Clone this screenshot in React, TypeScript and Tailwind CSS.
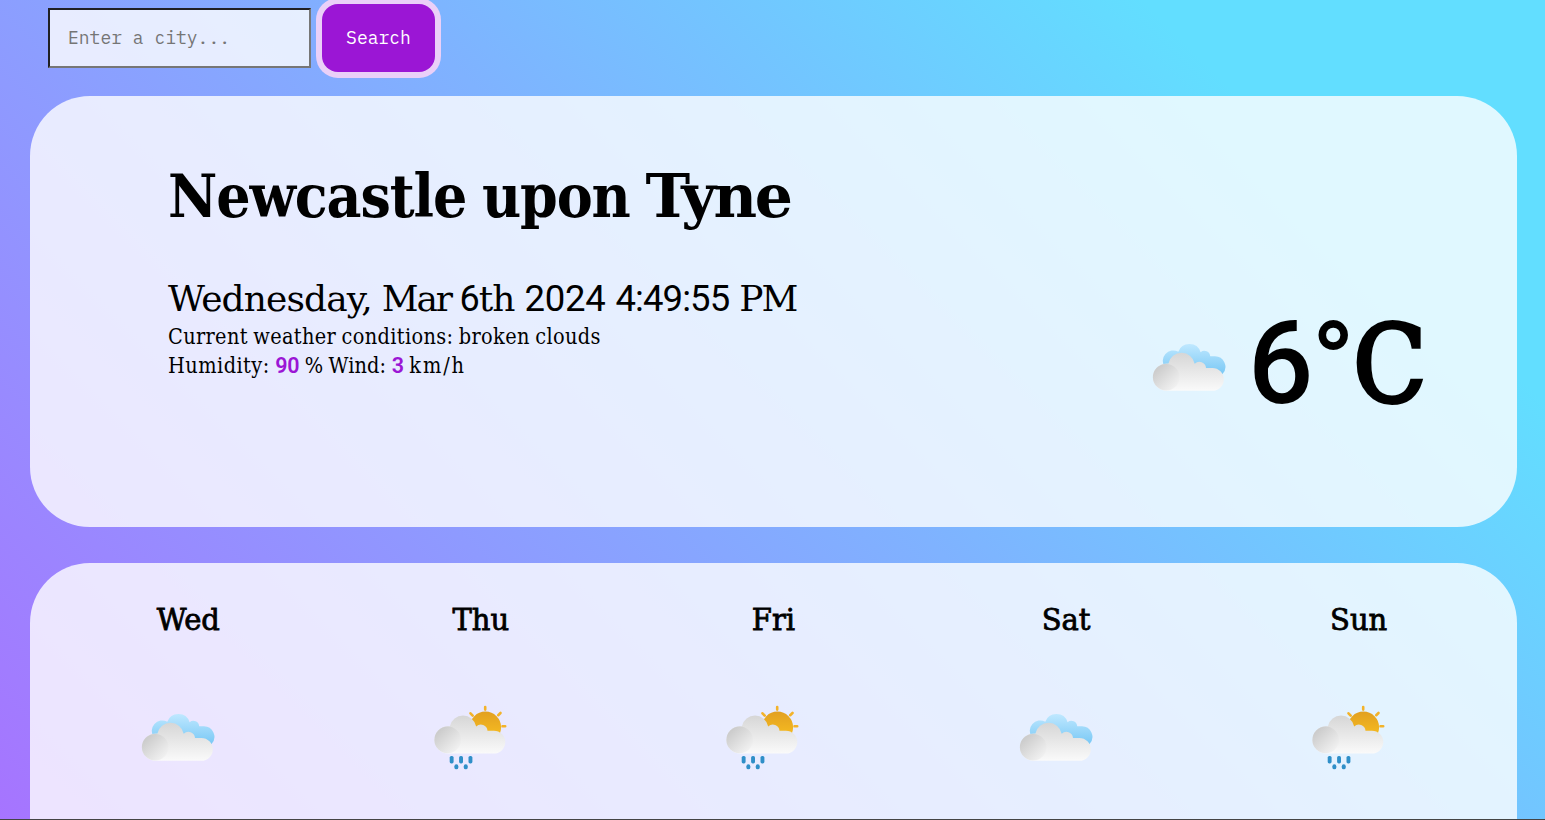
import React from "react";

const slab = "font-['Roboto_Slab','DejaVu_Serif',serif] [font-stretch:75%]";
const digits = "font-['Roboto',sans-serif] [font-stretch:100%]";

function CloudBody({ id }: { id: string }) {
  return (
    <>
      <defs>
        <linearGradient id={id + "f"} x1="0" y1="0" x2="0" y2="1">
          <stop offset="0" stopColor="#d6d6d6" />
          <stop offset="1" stopColor="#fafafa" />
        </linearGradient>
        <linearGradient id={id + "c"} x1="0.1" y1="0.1" x2="0.85" y2="0.9">
          <stop offset="0" stopColor="#c8c8c8" />
          <stop offset="1" stopColor="#f2f2f2" />
        </linearGradient>
      </defs>
      <path
        fill={`url(#${id}f)`}
        d="M35.6 70.8A13.7 13.7 0 0 1 22 57.1A13.7 13.7 0 0 1 37.4 43.6A13.4 13.4 0 0 1 63.7 43.8A6.6 6.6 0 0 1 75 48H81.4A11.4 11.4 0 0 1 81.4 70.8Z"
      />
      <circle cx="35.2" cy="57.2" r="13.3" fill={`url(#${id}c)`} />
    </>
  );
}

function CloudIcon({ id }: { id: string }) {
  return (
    <svg width="76" height="84" viewBox="20 15 76 84" className="block">
      <defs>
        <linearGradient id={id + "b"} x1="0" y1="0" x2="0" y2="1">
          <stop offset="0" stopColor="#bfe8ff" />
          <stop offset="1" stopColor="#6cc2f3" />
        </linearGradient>
      </defs>
      <path
        fill={`url(#${id}b)`}
        d="M33.8 47A10.4 10.4 0 0 1 47.3 31.8A11.8 11.8 0 0 1 69.6 32.2A5.8 5.8 0 0 1 79.2 36.3H83.5A10.5 10.5 0 0 1 91.5 54L60 60Z"
      />
      <CloudBody id={id} />
    </svg>
  );
}

function RainIcon({ id }: { id: string }) {
  return (
    <svg width="76" height="84" viewBox="17.5 15 76 84" className="block">
      <defs>
        <linearGradient id={id + "s"} x1="0" y1="0" x2="0" y2="1">
          <stop offset="0" stopColor="#e2a021" />
          <stop offset="1" stopColor="#fcc421" />
        </linearGradient>
      </defs>
      <circle cx="69.9" cy="37.3" r="15.7" fill={`url(#${id}s)`} />
      <path
        stroke="#f3b32a"
        strokeWidth="2.6"
        strokeLinecap="round"
        d="M69.7 17V19.6M57.2 25.6L55 23.3M82.7 25.2L85 23M87 36.2H89.7"
      />
      <g transform="translate(-3 -7.3)">
        <CloudBody id={id} />
      </g>
      <g fill="#2f8fc8">
        <rect x="34.2" y="66" width="3.9" height="7.4" rx="1.6" />
        <rect x="43.6" y="66" width="3.9" height="7.4" rx="1.6" />
        <rect x="53" y="66" width="3.9" height="7.4" rx="1.6" />
        <rect x="38.9" y="74.3" width="3.9" height="5" rx="1.9" />
        <rect x="48.3" y="74.3" width="3.9" height="5" rx="1.9" />
      </g>
    </svg>
  );
}

const days = [
  { name: "Wed", rain: false },
  { name: "Thu", rain: true },
  { name: "Fri", rain: true },
  { name: "Sat", rain: false },
  { name: "Sun", rain: true },
];

export default function App() {
  return (
    <div
      className={`flex h-[820px] w-full flex-col overflow-hidden border-b border-[#444] bg-[linear-gradient(45deg,#a674ff_0%,#7fb2ff_51%,#62deff_83%)] text-black ${slab}`}
    >
      <form className="flex h-24 shrink-0 items-start pl-12 pt-2" onSubmit={(e) => e.preventDefault()}>
        <input
          placeholder="Enter a city..."
          className="h-[60px] w-[263px] border-2 border-t-[#202024] border-l-[#202024] border-r-[#767676] border-b-[#767676] bg-white/80 px-[18px] pb-[2px] font-['IBM_Plex_Mono','Liberation_Mono',monospace] text-[18px] outline-none placeholder:text-[#757575]"
        />
        <button className="-mt-1 ml-[11px] h-[68px] w-[113px] rounded-[16px] bg-[#9b16d5] pb-[2px] font-['IBM_Plex_Mono','Liberation_Mono',monospace] text-[18px] text-white shadow-[0_0_0_6px_#ead0f8]">
          Search
        </button>
      </form>

      <section className="ml-[30px] flex h-[431px] w-[1487px] shrink-0 justify-between rounded-[60px] bg-white/80 pl-[138px] pr-[92px]">
        <div className="flex flex-col whitespace-nowrap pt-[60px]">
          <h1 className="h-[80px] text-[60px] leading-[80px] font-bold tracking-[-1.1px] [word-spacing:-2px]">
            Newcastle upon <span className="tracking-[-2.4px] [font-stretch:100%]">Tyne</span>
          </h1>
          <p className="mt-[39px] h-[47px] text-[36px] leading-[48px] tracking-[-0.9px] [font-stretch:100%] [word-spacing:-0.6px]">
            Wednesday, <span className="tracking-[-2.2px]">Mar </span>
            <span className={digits}>6</span>th{" "}
            <span className={`${digits} text-[36.5px] tracking-[-0.3px]`}>2024</span>{" "}
            <span className={`${digits} text-[36.5px] tracking-[-0.9px]`}>4:49:55</span>{" "}
            <span className="tracking-[-2px]">PM</span>
          </p>
          <p className="h-[29px] text-[21.5px] leading-[29px] tracking-[0.34px] [word-spacing:-1px]">
            Current weather conditions: broken clouds
          </p>
          <p className="h-[29px] text-[21.5px] leading-[29px] tracking-[0.45px] [word-spacing:-1px]">
            Humidity: <span className={`${digits} font-semibold tracking-[-0.3px] text-[#9b16d5]`}>90</span>{" "}
            <span className="tracking-[0.1px]">% Wind:</span>{" "}
            <span className={`${digits} font-semibold tracking-[-0.3px] text-[#9b16d5]`}>3</span>{" "}
            <span className="tracking-[1.9px]">km/h</span>
          </p>
        </div>
        <div className="flex items-start">
          <div className="pt-[239px]">
            <CloudIcon id="now" />
          </div>
          <p
            className={`mt-[188px] ml-[21px] h-[160px] w-[177px] text-[115px] leading-[160px] font-medium tracking-[-2px] whitespace-nowrap ${digits}`}
          >
            6°
            <span className="align-[2px] font-['Roboto_Slab','DejaVu_Serif',serif] text-[106px] leading-none [-webkit-text-stroke:4px_#000] [font-stretch:75%]">
              C
            </span>
          </p>
        </div>
      </section>

      <section className="mt-9 ml-[30px] grid h-[431px] w-[1487px] shrink-0 grid-cols-5 rounded-[60px] bg-white/80 px-[12px]">
        {days.map((day, i) => (
          <div key={day.name} className="flex flex-col items-center">
            <h2 className="mt-[37px] h-[40px] text-[29px] leading-[40px] font-medium [font-stretch:100%] [-webkit-text-stroke:0.8px_#000]">
              {day.name}
            </h2>
            <div className="mt-[65px] mr-5">
              {day.rain ? <RainIcon id={"d" + i} /> : <CloudIcon id={"d" + i} />}
            </div>
          </div>
        ))}
      </section>
    </div>
  );
}
